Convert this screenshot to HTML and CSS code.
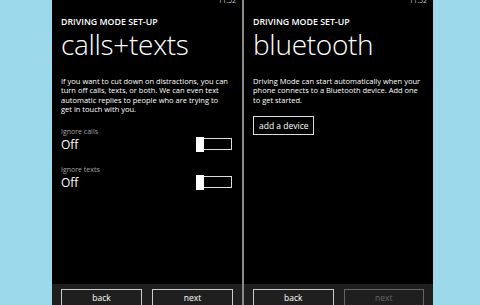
FILE: index.html
```html
<!DOCTYPE html>
<html lang="en">

<head>
    <meta charset="UTF-8">
    <title>Driving Mode Set-up</title>
    <link rel="stylesheet" href="styles.css">
</head>

<body>
    <div class="phones">
        <div class="screen">
            <div class="status">11:52</div>
            <div class="content">
                <div class="app-title">DRIVING MODE SET-UP</div>
                <h1 class="page-title">calls+texts</h1>
                <p class="desc">If you want to cut down on distractions, you can turn off calls, texts, or both. We can even text automatic replies to people who are trying to<br>get in touch with you.</p>

                <div class="setting">
                    <div class="setting-label">Ignore calls</div>
                    <div class="setting-row">
                        <span class="setting-value">Off</span>
                        <span class="toggle"><span class="thumb"></span><span class="track"></span></span>
                    </div>
                </div>

                <div class="setting">
                    <div class="setting-label">Ignore texts</div>
                    <div class="setting-row">
                        <span class="setting-value">Off</span>
                        <span class="toggle"><span class="thumb"></span><span class="track"></span></span>
                    </div>
                </div>
            </div>
            <div class="app-bar">
                <button class="bar-btn">back</button>
                <button class="bar-btn">next</button>
            </div>
        </div>

        <div class="screen second">
            <div class="status">11:52</div>
            <div class="content">
                <div class="app-title">DRIVING MODE SET-UP</div>
                <h1 class="page-title">bluetooth</h1>
                <p class="desc">Driving Mode can start automatically when your phone connects to a Bluetooth device. Add one to get started.</p>
                <button class="add-btn">add a device</button>
            </div>
            <div class="app-bar">
                <button class="bar-btn">back</button>
                <button class="bar-btn disabled">next</button>
            </div>
        </div>
    </div>
</body>

</html>
```

FILE: styles.css
```css
* {
    box-sizing: border-box;
    font-family: 'Open Sans', 'Noto Sans', sans-serif;
}

body {
    margin: 0;
    background-color: #9cd9eb;
    overflow: hidden;
}

.phones {
    display: flex;
    padding-left: 52px;
    height: 305px;
}

.screen {
    width: 190px;
    height: 305px;
    background-color: #000;
    color: #fff;
    display: flex;
    flex-direction: column;
}

.screen.second {
    width: 191px;
    border-left: 2px solid #8a8a8a;
}

.status {
    height: 8px;
    margin-top: -3px;
    padding-right: 6px;
    text-align: right;
    font-size: 7px;
    line-height: 8px;
    color: #ccc;
}

.content {
    flex: 1;
    padding: 11px 9px 0;
}

.app-title {
    font-size: 8.8px;
    font-weight: 600;
    line-height: 12px;
}

.page-title {
    margin: 0;
    font-size: 28px;
    font-weight: 300;
    line-height: 32px;
    letter-spacing: -0.3px;
}

.desc {
    margin: 17px 0 0;
    font-size: 7.5px;
    line-height: 9.3px;
}

.setting {
    margin-top: 13px;
}

.setting + .setting {
    margin-top: 13px;
}

.setting-label {
    font-size: 7px;
    line-height: 9px;
    color: #a6a6a6;
}

.setting-row {
    display: flex;
    justify-content: space-between;
    align-items: center;
    height: 16px;
}

.setting-value {
    font-size: 12px;
    color: #fff;
}

.toggle {
    display: flex;
    align-items: center;
    margin-right: 1px;
}

.thumb {
    width: 8px;
    height: 15px;
    background-color: #fff;
}

.track {
    width: 28px;
    height: 12px;
    border: 1px solid #ddd;
    border-left: none;
}

.add-btn {
    margin-top: 11px;
    height: 19px;
    padding: 0 5px;
    background: none;
    border: 1px solid #ddd;
    color: #fff;
    font-size: 8.5px;
}

.app-bar {
    height: 21px;
    background-color: #1f1f1f;
    display: flex;
    gap: 10px;
    padding: 5px 9px 0;
}

.bar-btn {
    flex: 1;
    height: 22px;
    padding: 0 0 6px;
    background: none;
    border: 1px solid #ccc;
    color: #fff;
    font-size: 8.5px;
}

.bar-btn.disabled {
    border-color: #666;
    color: #666;
}
```
